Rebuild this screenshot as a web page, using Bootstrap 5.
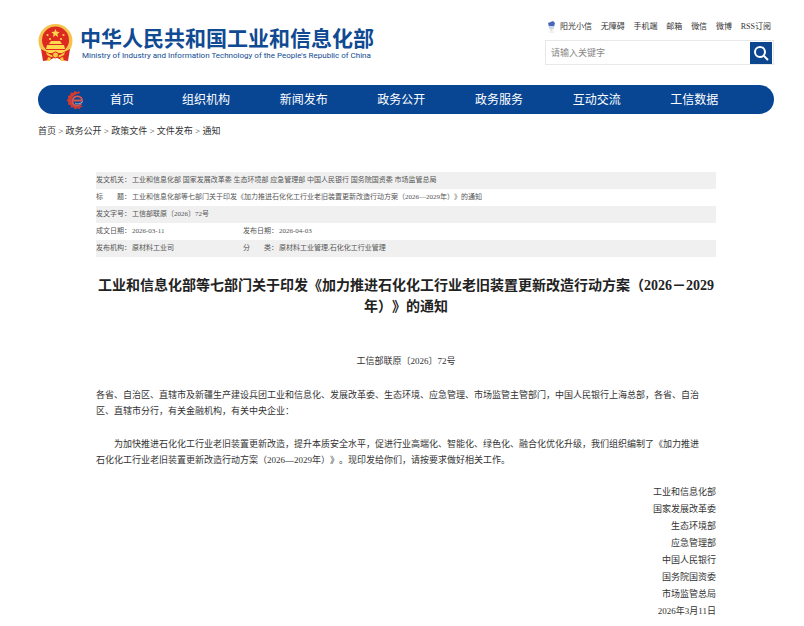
<!DOCTYPE html>
<html lang="zh-CN">
<head>
<meta charset="utf-8">
<meta name="viewport" content="width=device-width, initial-scale=1">
<title>中华人民共和国工业和信息化部</title>
<link href="https://cdn.jsdelivr.net/npm/bootstrap@5.3.0/dist/css/bootstrap.min.css" rel="stylesheet">
<style>
body{font-family:"Liberation Serif","Noto Sans CJK SC",serif;font-size:9px;line-height:16px;color:#333;background:#fff;text-spacing-trim:space-all}
a{color:inherit;text-decoration:none}
.page-wrap{padding:0 30px 0 38px}
.site-head{padding-top:17px;height:85px}
.brand{gap:7px;padding-top:7px;color:#0f4a92}
.brand-name{font:bold 21px/26px "Noto Sans CJK SC",sans-serif;white-space:nowrap}
.brand-en{font:8px/12px Roboto,"Noto Sans CJK SC",sans-serif;white-space:nowrap;padding-left:2px}
.head-tools{width:229px}
.quick-links{font-size:8px;line-height:20px;padding-right:3px;white-space:nowrap}
.search-box{height:25px;border:1px solid #e6e8ec;padding:0 1px 0 5px;margin-top:3px}
.search-box input{font-size:9px;line-height:16px;color:#555;min-width:0;outline-offset:2px}
.search-box input::placeholder{color:#888;opacity:1}
.search-box button{width:22px;height:22px;background:#0c468f}
.main-nav{background:#084694;border-radius:15px;height:29px;padding:0 6px 0 28px;color:#fff;font-size:12px}
.main-nav li{flex:1 1 0;white-space:nowrap}
.main-nav li.nav-home{flex:0 0 72px}
.nav-logo{margin-right:24px}
.crumbs{padding-top:9px;margin-bottom:33px}
.article{padding:0 58px}
.meta-table{table-layout:fixed;font-size:7px;line-height:17px;color:#555}
.meta-table th,.meta-table td{padding:0;font-weight:normal;white-space:nowrap}
.meta-table tr:nth-child(odd){background:#f0f0f0}
.col-label{width:36px}
.col-date{width:111px}
.doc-title{font-size:14px;line-height:21px;font-weight:bold;color:#222;margin:18px 0 36px}
.doc-no{margin-bottom:18px}
.doc-text p{margin-bottom:17px}
.indent{text-indent:2em}
.signers{line-height:17px;margin-top:-1px}
</style>
<script src="https://cdn.jsdelivr.net/npm/bootstrap@5.3.0/dist/js/bootstrap.bundle.min.js"></script>
</head>
<body>
<div class="page-wrap">
  <header class="site-head d-flex justify-content-between align-items-start">
    <a class="brand d-flex align-items-start" href="#">
      <svg width="35" height="38" viewBox="0 0 35 38" aria-hidden="true">
        <circle cx="17.500" cy="17" r="17" fill="#f5c34b"/>
        <circle cx="17.500" cy="16" r="13.500" fill="#dd2a20"/>
        <path d="M17.500 5l1.200 2.800 3 .2-2.300 2 .7 2.900-2.600-1.600-2.600 1.600.7-2.900-2.300-2 3-.2z" fill="#ffd84d"/>
        <g fill="#ffd84d"><circle cx="9.500" cy="11" r="1.100"/><circle cx="25.500" cy="11" r="1.100"/><circle cx="12" cy="15" r="1.100"/><circle cx="23" cy="15" r="1.100"/>
        <path d="M13 17h9l2 3H11zM9 21h17l1 4H8zM6 26h23l-2 3H8z"/></g>
        <path d="M3 25l8 4h13l8-4-2 12-7-1-5.500-3L12 36l-7 1z" fill="#dc2a1f"/>
        <path d="M8 28l5 3h9l5-3-1 3-4 2h-9l-4-2z" fill="#f7c743"/>
        <path d="M10 33l3 1-1 3H9zM25 33l-3 1 1 3h3z" fill="#f7c743"/>
        <circle cx="17.500" cy="31" r="3" fill="#f7c743" stroke="#dc2a1f"/>
      </svg>
      <span>
        <span class="brand-name d-block">中华人民共和国工业和信息化部</span>
        <span class="brand-en d-block">Ministry of Industry and Information Technology of the People's Republic of China</span>
      </span>
    </a>
    <div class="head-tools">
      <nav class="quick-links d-flex justify-content-between" aria-label="快捷链接">
        <a class="d-flex align-items-center gap-1" href="#">
          <svg width="11" height="15" viewBox="0 0 11 15" aria-hidden="true"><path d="M3 3l5-2 2 2-1 4H4z" fill="#4b66ba"/><path d="M4 6h5v3H4z" fill="#cbd5ec"/><path d="M5 9h3l1 4H4z" fill="#eef0f4"/><path d="M6 9l1 1-1 1z" fill="#e6ce70"/></svg>阳光小信</a>
        <a href="#">无障碍</a><a href="#">手机端</a><a href="#">邮箱</a><a href="#">微信</a><a href="#">微博</a><a href="#">RSS订阅</a>
      </nav>
      <form class="search-box d-flex align-items-center" role="search">
        <input class="flex-grow-1 border-0 p-0 bg-transparent" type="search" placeholder="请输入关键字" aria-label="请输入关键字">
        <button class="border-0 p-0 d-flex align-items-center justify-content-center" type="button" aria-label="搜索">
          <svg width="16" height="16" viewBox="0 0 16 16" fill="none" stroke="#fff" stroke-width="2" aria-hidden="true"><circle cx="7" cy="7" r="5"/><path d="M10.600 10.600L15 15"/></svg>
        </button>
      </form>
    </div>
  </header>

  <nav class="main-nav d-flex align-items-center" aria-label="主导航">
    <svg class="nav-logo flex-shrink-0" width="20" height="20" viewBox="0 0 20 20" aria-hidden="true">
      <path d="M17 3l-3 .3L13 1l-2 1.300L8.500.8 7.500 3 4.600 2.600l-.2 2.700-2.600.7.700 2.500L.5 10.300l2 1.700-.7 2.600 2.700.5.500 2.700 2.600-.6 1.500 2.200 2.200-1.400 2.300 1.200 1.200-2.300 2.500-.3-2-1C11 18 6 16 5.500 11 5 6 10 3 17 3z" fill="#d8392f"/>
      <path d="M7 10.500h9c.5-5-8-6-9.500-.5-1 5.500 5.500 7.500 9 3.500" fill="none" stroke="#d8584f" stroke-width="1.800"/>
      <path d="M9 13c2 1.500 5 1 8-1.500" fill="none" stroke="#8fa9d8" stroke-width="1"/>
    </svg>
    <ul class="list-unstyled d-flex flex-grow-1 mb-0">
      <li class="nav-home"><a href="#">首页</a></li>
      <li><a href="#">组织机构</a></li>
      <li><a href="#">新闻发布</a></li>
      <li><a href="#">政务公开</a></li>
      <li><a href="#">政务服务</a></li>
      <li><a href="#">互动交流</a></li>
      <li><a href="#">工信数据</a></li>
    </ul>
  </nav>

  <nav class="crumbs" aria-label="当前位置"><a href="#">首页</a> &gt; <a href="#">政务公开</a> &gt; <a href="#">政策文件</a> &gt; <a href="#">文件发布</a> &gt; <a href="#">通知</a></nav>

  <main class="article">
    <table class="meta-table w-100">
      <colgroup><col class="col-label"><col class="col-date"><col class="col-label"><col></colgroup>
      <tbody>
        <tr><th scope="row">发文机关：</th><td colspan="3">工业和信息化部 国家发展改革委 生态环境部 应急管理部 中国人民银行 国务院国资委 市场监管总局</td></tr>
        <tr><th scope="row">标　　题：</th><td colspan="3">工业和信息化部等七部门关于印发《加力推进石化化工行业老旧装置更新改造行动方案（2026—2029年）》的通知</td></tr>
        <tr><th scope="row">发文字号：</th><td colspan="3">工信部联原〔2026〕72号</td></tr>
        <tr><th scope="row">成文日期：</th><td>2026-03-11</td><th scope="row">发布日期：</th><td>2026-04-03</td></tr>
        <tr><th scope="row">发布机构：</th><td>原材料工业司</td><th scope="row">分　　类：</th><td>原材料工业管理,石化化工行业管理</td></tr>
      </tbody>
    </table>

    <h1 class="doc-title text-center">工业和信息化部等七部门关于印发《加力推进石化化工行业老旧装置更新改造行动方案（2026－2029年）》的通知</h1>
    <p class="doc-no text-center">工信部联原〔2026〕72号</p>
    <div class="doc-text">
      <p>各省、自治区、直辖市及新疆生产建设兵团工业和信息化、发展改革委、生态环境、应急管理、市场监管主管部门，中国人民银行上海总部，各省、自治<br>区、直辖市分行，有关金融机构，有关中央企业：</p>
      <p class="indent">为加快推进石化化工行业老旧装置更新改造，提升本质安全水平，促进行业高端化、智能化、绿色化、融合化优化升级，我们组织编制了《加力推进<br>石化化工行业老旧装置更新改造行动方案（2026—2029年）》。现印发给你们，请按要求做好相关工作。</p>
    </div>
    <ul class="signers list-unstyled text-end mb-0">
      <li>工业和信息化部</li>
      <li>国家发展改革委</li>
      <li>生态环境部</li>
      <li>应急管理部</li>
      <li>中国人民银行</li>
      <li>国务院国资委</li>
      <li>市场监管总局</li>
      <li>2026年3月11日</li>
    </ul>
  </main>
</div>
</body>
</html>
